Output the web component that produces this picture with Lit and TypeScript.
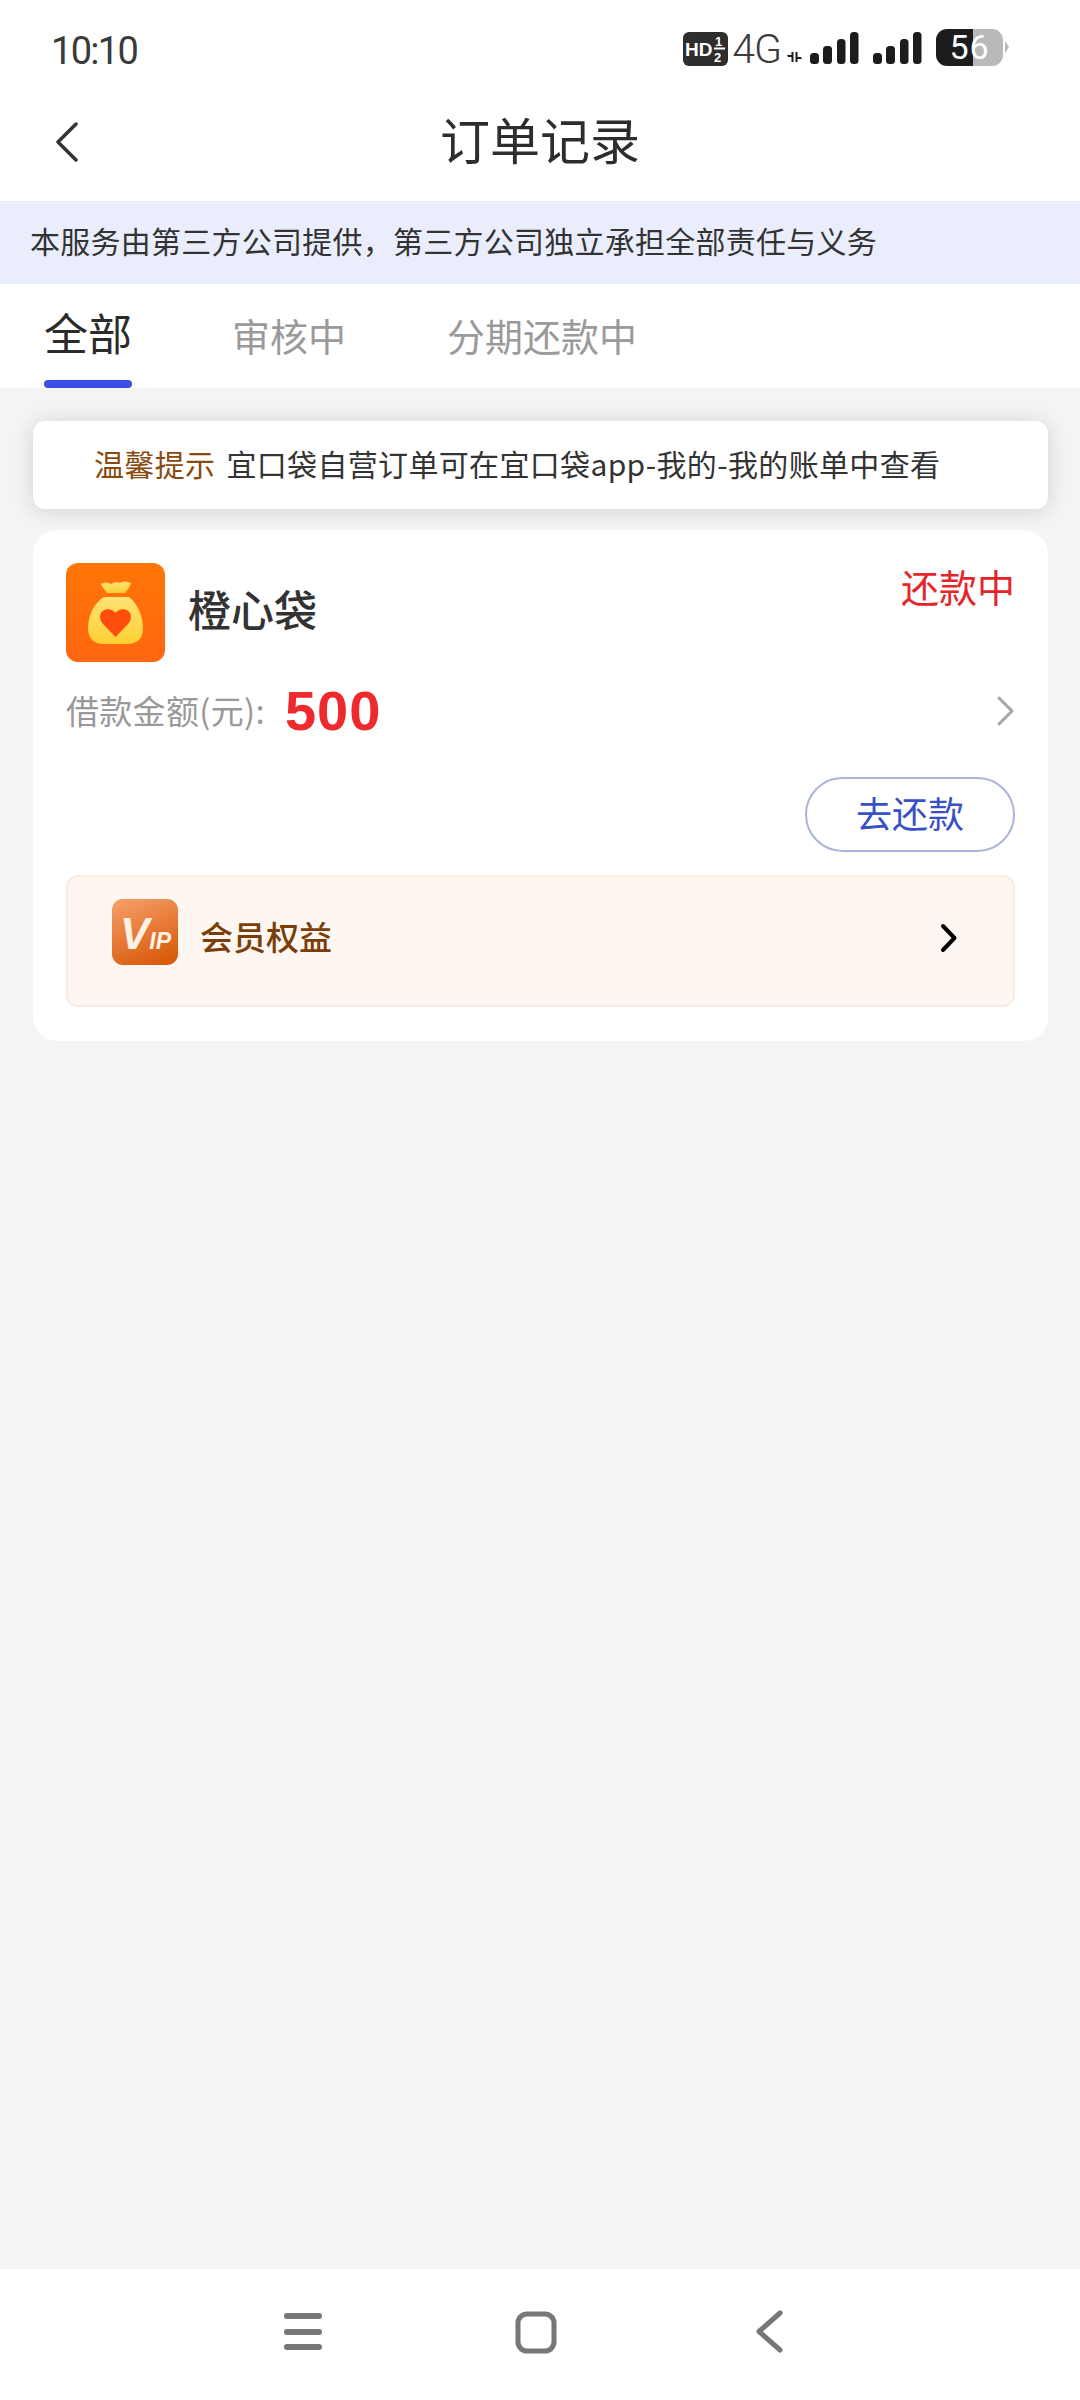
import { LitElement, html, css, svg } from 'lit';
import { customElement } from 'lit/decorators.js';

const signal = () => svg`
  <rect x="0" y="21" width="9" height="11" rx="3.5" fill="#1c1c1c"/>
  <rect x="13" y="14" width="9" height="18" rx="3.5" fill="#1c1c1c"/>
  <rect x="27" y="7" width="8.5" height="25" rx="3.5" fill="#1c1c1c"/>
  <rect x="40" y="0" width="8.5" height="32" rx="3.5" fill="#1c1c1c"/>
`;

@customElement('app-root')
export class AppRoot extends LitElement {
  static styles = css`
    :host {
      display: block;
      width: 1080px;
      height: 2400px;
      font-family: "Noto Sans CJK SC", "Noto Sans", sans-serif;
      color: #2b2b2b;
    }

    .page {
      height: 2400px;
      display: flex;
      flex-direction: column;
      background: #f4f4f4;
    }

    .status {
      height: 82px;
      flex: none;
      background: #fff;
      display: flex;
      align-items: center;
      padding: 12px 71px 0 51px;
      box-sizing: border-box;
    }

    .time {
      font-family: "Roboto", sans-serif;
      font-size: 38px;
      color: #3a3a3a;
      line-height: 1;
      letter-spacing: -1.7px;
      margin-top: 7px;
    }

    .status-right {
      margin-left: auto;
      display: flex;
      align-items: center;
    }

    .hd {
      width: 45px;
      height: 34px;
      display: block;
      margin-top: 4px;
    }

    .net {
      font-family: "Roboto", sans-serif;
      font-size: 41px;
      font-weight: 300;
      color: #3c3c3c;
      line-height: 1;
      margin: 4px 6px 0 4px;
      letter-spacing: -1px;
    }

    .arrows {
      width: 15px;
      height: 10px;
      margin: 20px 8px 0 0;
    }

    .sig {
      width: 49px;
      height: 32px;
      display: block;
      margin-top: 2px;
    }

    .sig.second {
      margin-left: 14px;
    }

    .battery {
      margin-left: 14px;
      width: 67px;
      height: 37px;
      border-radius: 11px;
      background: linear-gradient(90deg, #1c1c1c 0 37px, #b9b9b9 37px);
      color: #fff;
      font-family: "Roboto", sans-serif;
      font-size: 34px;
      line-height: 37px;
      text-align: center;
      letter-spacing: 1px;
    }

    .battery-tip {
      width: 4px;
      height: 12px;
      margin-left: 2px;
      display: block;
    }

    .nav {
      height: 119px;
      flex: none;
      background: #fff;
      display: flex;
      align-items: center;
      justify-content: center;
      position: relative;
    }

    .back {
      position: absolute;
      left: 54px;
      top: 40px;
      width: 28px;
      height: 40px;
    }

    .title {
      font-size: 50px;
      font-weight: 400;
      line-height: 1;
      margin-top: -7px;
      color: #2d2d2d;
    }

    .notice {
      height: 83px;
      flex: none;
      box-sizing: border-box;
      background: #eaeefc;
      display: flex;
      align-items: center;
      padding: 0 0 5px 30px;
      font-size: 30px;
      letter-spacing: 0.25px;
      color: #333;
      line-height: 1;
    }

    .tabs {
      height: 104px;
      flex: none;
      background: #fff;
      display: flex;
      padding-left: 44px;
      box-sizing: border-box;
    }

    .tab {
      position: relative;
      display: flex;
      align-items: center;
      height: 96px;
      padding-top: 6px;
      box-sizing: border-box;
      font-size: 38px;
      color: #9a9a9a;
      margin-right: 101px;
      line-height: 1;
    }

    .tab.on {
      font-size: 44px;
      color: #2b2b2b;
      margin-right: 100px;
      padding-top: 0;
    }

    .tab.on::after {
      content: '';
      position: absolute;
      left: 0;
      right: 0;
      bottom: -8px;
      height: 8px;
      border-radius: 4px;
      background: #3b4fe0;
    }

    .content {
      flex: 1;
      padding: 33px 32px 0 33px;
      display: flex;
      flex-direction: column;
      gap: 21px;
    }

    .tip {
      height: 88px;
      flex: none;
      box-sizing: border-box;
      background: #fff;
      border-radius: 12px;
      box-shadow: 0 2px 22px rgba(0, 0, 0, 0.14);
      display: flex;
      align-items: center;
      padding: 0 0 5px 61px;
      font-size: 30px;
      line-height: 1;
      letter-spacing: 0.34px;
      color: #333;
    }

    .tip b {
      font-weight: 400;
      color: #8a4a0e;
      margin-right: 11px;
    }

    .card {
      height: 511px;
      flex: none;
      box-sizing: border-box;
      background: #fff;
      border-radius: 24px;
      padding: 33px 33px 33px;
      display: flex;
      flex-direction: column;
    }

    .head {
      display: flex;
      height: 99px;
      flex: none;
    }

    .logo {
      width: 99px;
      height: 99px;
      display: block;
      flex: none;
    }

    .name {
      margin: 20px 0 0 23px;
      font-size: 43px;
      font-weight: 500;
      line-height: 50px;
      color: #333;
    }

    .state {
      margin-left: auto;
      font-size: 38px;
      line-height: 1;
      color: #e6252b;
      margin-top: 4px;
    }

    .amount {
      display: flex;
      align-items: center;
      height: 60px;
      margin-top: 20px;
      flex: none;
    }

    .amount .label {
      font-size: 33px;
      letter-spacing: 0.3px;
      color: #999;
      line-height: 1;
      margin-bottom: 4px;
    }

    .amount .num {
      font-family: "Liberation Sans", sans-serif;
      font-weight: 700;
      font-size: 56px;
      letter-spacing: 1px;
      color: #ee2a2f;
      line-height: 1;
      margin: 0 0 2px 20px;
    }

    .amount svg {
      margin: 0 -1px 2px auto;
      width: 20px;
      height: 32px;
    }

    .actions {
      display: flex;
      justify-content: flex-end;
      margin-top: 35px;
      flex: none;
    }

    .pay {
      width: 210px;
      height: 75px;
      box-sizing: border-box;
      border: 2px solid #aab4dc;
      border-radius: 38px;
      background: #fff;
      color: #3a50c8;
      font: 400 36px/1 "Noto Sans CJK SC", sans-serif;
      padding: 0 0 6px;
    }

    .vip {
      margin-top: 23px;
      height: 132px;
      flex: none;
      box-sizing: border-box;
      background: #fef7f1;
      border: 2px solid #f9ebde;
      border-radius: 12px;
      display: flex;
      padding: 22px 55px 0 44px;
    }

    .vip-icon {
      width: 66px;
      height: 66px;
      display: block;
      flex: none;
    }

    .vip span {
      margin: 15px 0 0 22px;
      font-size: 33px;
      font-weight: 500;
      line-height: 44px;
      color: #7a3e0a;
    }

    .vip .go {
      margin: 24px 0 0 auto;
      width: 20px;
      height: 30px;
      display: block;
    }

    .sysnav {
      height: 131px;
      flex: none;
      background: #fff;
      display: flex;
      align-items: center;
      padding-bottom: 6px;
      box-sizing: border-box;
    }

    .sysnav svg {
      display: block;
      width: 44px;
      height: 44px;
    }

    .sysnav .menu { margin-left: 281px; }
    .sysnav .home { margin-left: 189px; }
    .sysnav .ret { margin-left: 193px; }
  `;

  render() {
    return html`
      <div class="page">
        <div class="status">
          <div class="time">10:10</div>
          <div class="status-right">
            <svg class="hd" viewBox="0 0 45 34">
              <rect width="45" height="34" rx="6" fill="#2e2e2e"/>
              <text x="2" y="24" font-family="Liberation Sans" font-weight="700" font-size="19" fill="#fff">HD</text>
              <text x="32" y="14" font-family="Liberation Sans" font-weight="700" font-size="13" fill="#fff">1</text>
              <rect x="31" y="15.5" width="11" height="2" fill="#fff"/>
              <text x="31" y="30" font-family="Liberation Sans" font-weight="700" font-size="13" fill="#fff">2</text>
            </svg>
            <div class="net">4G</div>
            <svg class="arrows" viewBox="0 0 15 10">
              <path d="M0 3h4.500V0H6.500V10H4.500V5H1z M8.500 0h2v5h3.500L15 7h-4.500v3h-2z" fill="#1c1c1c"/>
            </svg>
            <svg class="sig" viewBox="0 0 49 32">${signal()}</svg>
            <svg class="sig second" viewBox="0 0 49 32">${signal()}</svg>
            <div class="battery">56</div>
            <svg class="battery-tip" viewBox="0 0 4 12"><path d="M0 0l4 6-4 6z" fill="#b9b9b9"/></svg>
          </div>
        </div>

        <div class="nav">
          <svg class="back" viewBox="0 0 28 40" fill="none" stroke="#333" stroke-width="3.500" stroke-linecap="round" stroke-linejoin="round">
            <path d="M22 2L4 20l18 18"/>
          </svg>
          <div class="title">订单记录</div>
        </div>

        <div class="notice">本服务由第三方公司提供，第三方公司独立承担全部责任与义务</div>

        <div class="tabs">
          <div class="tab on">全部</div>
          <div class="tab">审核中</div>
          <div class="tab">分期还款中</div>
        </div>

        <div class="content">
          <div class="tip"><b>温馨提示</b>宜口袋自营订单可在宜口袋app-我的-我的账单中查看</div>

          <div class="card">
            <div class="head">
              <svg class="logo" viewBox="0 0 99 99">
                <defs>
                  <linearGradient id="bg" x1="0" y1="0" x2="0" y2="1">
                    <stop offset="0" stop-color="#ff7606"/>
                    <stop offset="1" stop-color="#ff6610"/>
                  </linearGradient>
                  <linearGradient id="bag" x1="0" y1="0" x2="0" y2="1">
                    <stop offset="0" stop-color="#ffe274"/>
                    <stop offset="1" stop-color="#fdd033"/>
                  </linearGradient>
                </defs>
                <rect width="99" height="99" rx="12" fill="url(#bg)"/>
                <path d="M35 21c4-2 7-2 10 0 3-2 7-2 9-1 3-2 7-2 11 0-1 4-4 7-6 10H41c-2-3-5-6-6-9z" fill="url(#bag)"/>
                <path d="M38 34h25c8 6 14 19 14 31 0 11-6 16-16 16H38c-10 0-16-5-16-16 0-12 6-25 16-31z" fill="url(#bag)"/>
                <path d="M49.500 74L37 61c-3-3-3.500-7-2.500-10 2-5 10-7 15-1 5-6 13-4 15 1 1 3 .5 7-2.500 10z" fill="#ff4d0c"/>
              </svg>
              <div class="name">橙心袋</div>
              <div class="state">还款中</div>
            </div>

            <div class="amount">
              <span class="label">借款金额(元):</span>
              <span class="num">500</span>
              <svg viewBox="0 0 20 32" fill="none" stroke="#a6a6a6" stroke-width="3" stroke-linecap="round" stroke-linejoin="round">
                <path d="M3 3l13 13L3 29"/>
              </svg>
            </div>

            <div class="actions"><button class="pay">去还款</button></div>

            <div class="vip">
              <svg class="vip-icon" viewBox="0 0 66 66">
                <defs>
                  <linearGradient id="vg" x1="0.3" y1="0" x2="0.7" y2="1">
                    <stop offset="0" stop-color="#f39a62"/>
                    <stop offset="1" stop-color="#d85a0a"/>
                  </linearGradient>
                </defs>
                <rect width="66" height="66" rx="11" fill="url(#vg)"/>
                <text x="8" y="50" font-family="Liberation Sans" font-style="italic" font-weight="700" fill="#fdf1e4"><tspan font-size="44">V</tspan><tspan font-size="23">IP</tspan></text>
              </svg>
              <span>会员权益</span>
              <svg class="go" viewBox="0 0 20 30" fill="none" stroke="#000" stroke-width="4" stroke-linecap="round" stroke-linejoin="round">
                <path d="M5 3l11.500 12L5 27"/>
              </svg>
            </div>
          </div>
        </div>

        <div class="sysnav">
          <svg class="menu" viewBox="0 0 44 44" fill="#777">
            <rect x="3" y="3" width="38" height="6" rx="3"/>
            <rect x="3" y="19" width="38" height="6" rx="3"/>
            <rect x="3" y="34" width="38" height="6" rx="3"/>
          </svg>
          <svg class="home" viewBox="0 0 44 44" fill="none" stroke="#777" stroke-width="5">
            <rect x="4" y="4" width="36" height="37" rx="9"/>
          </svg>
          <svg class="ret" viewBox="0 0 44 44" fill="none" stroke="#777" stroke-width="5" stroke-linecap="round" stroke-linejoin="round">
            <path d="M29 3L8 21.500 29 40"/>
          </svg>
        </div>
      </div>
    `;
  }
}
